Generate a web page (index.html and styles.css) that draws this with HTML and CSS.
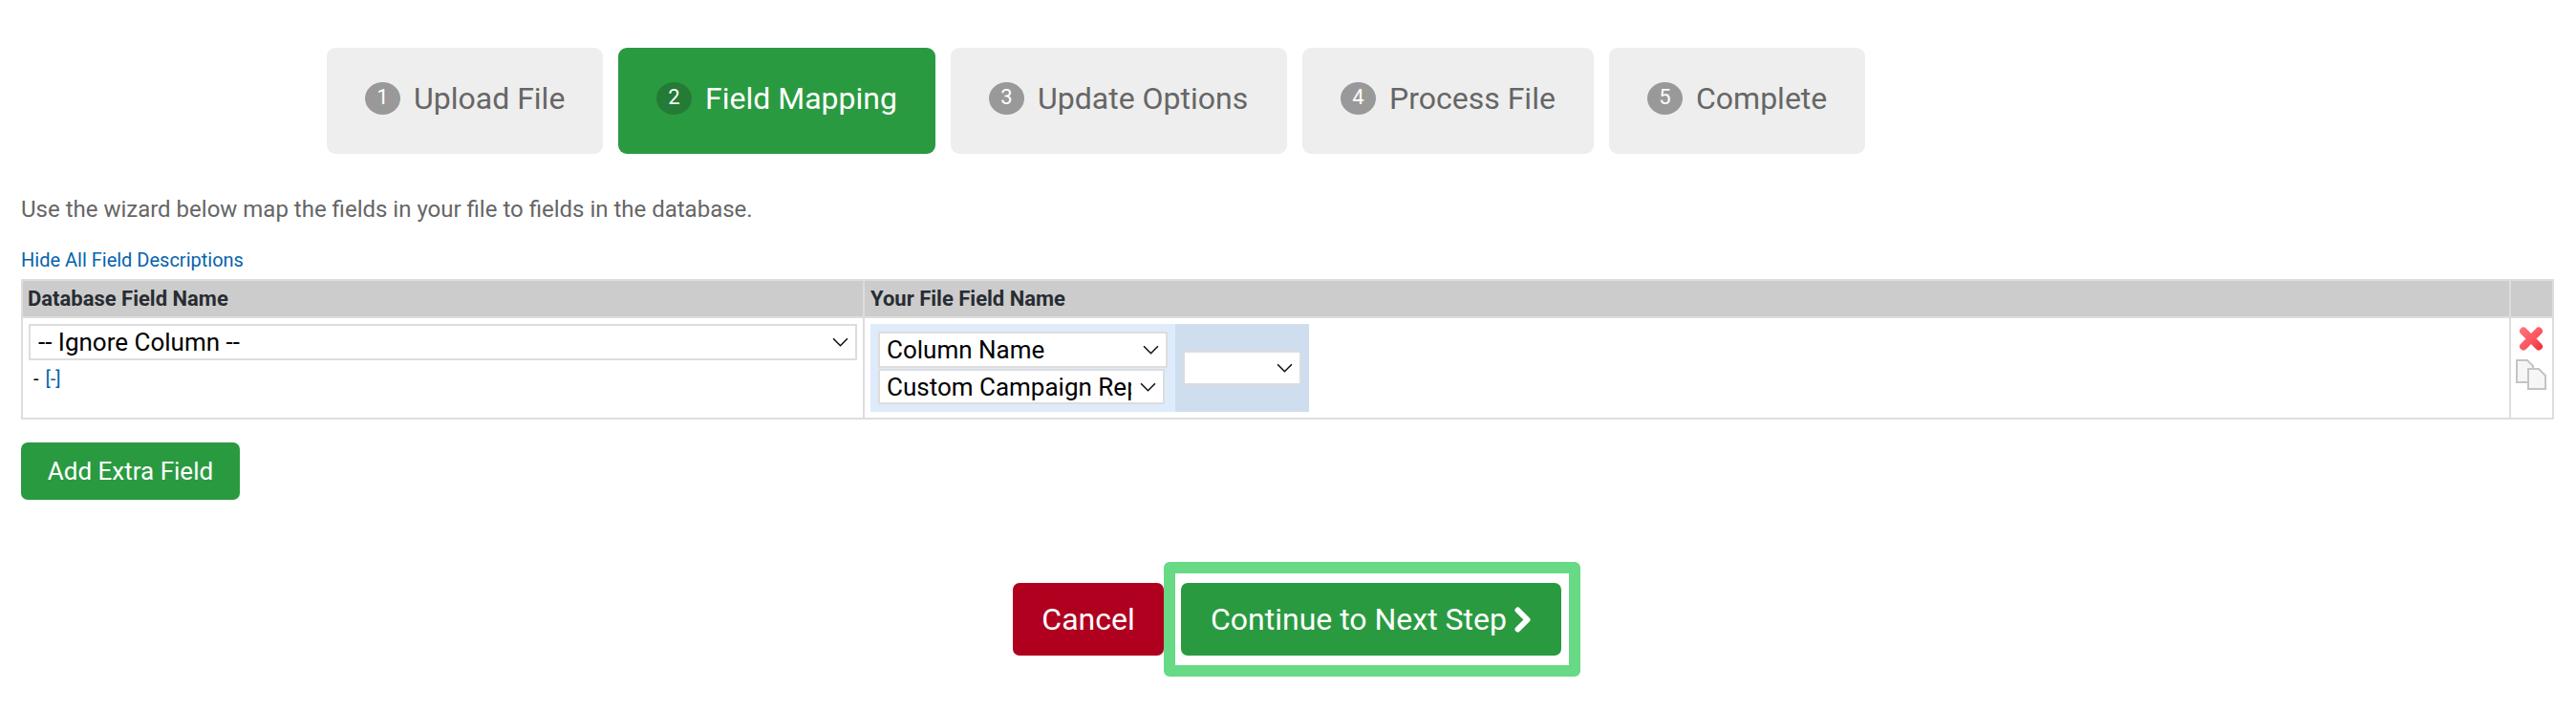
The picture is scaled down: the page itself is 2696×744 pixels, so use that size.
FILE: index.html
```html
<!DOCTYPE html>
<html lang="en">
<head>
<meta charset="utf-8">
<title>Field Mapping</title>
<link rel="stylesheet" href="styles.css">
</head>
<body>
<nav class="steps">
  <div class="step"><span class="num">1</span><span>Upload File</span></div>
  <div class="step active"><span class="num">2</span><span>Field Mapping</span></div>
  <div class="step"><span class="num">3</span><span>Update Options</span></div>
  <div class="step"><span class="num">4</span><span>Process File</span></div>
  <div class="step"><span class="num">5</span><span>Complete</span></div>
</nav>
<p class="intro">Use the wizard below map the fields in your file to fields in the database.</p>
<a class="hide-link">Hide All Field Descriptions</a>
<table class="map">
  <colgroup><col class="c1"><col class="c2"><col class="c3"></colgroup>
  <thead>
    <tr><th>Database Field Name</th><th class="th-file">Your File Field Name</th><th></th></tr>
  </thead>
  <tbody>
    <tr>
      <td class="db">
        <div class="sel sel-db"><span class="val">-- Ignore Column --</span><svg class="chev" viewBox="0 0 16 9"><path d="M1 1l7 7 7-7"/></svg></div>
        <div class="desc">- <a>[-]</a></div>
      </td>
      <td class="file">
        <div class="panel">
          <div class="panel-main">
            <div class="sel sel-a"><span class="val">Column Name</span><svg class="chev" viewBox="0 0 16 9"><path d="M1 1l7 7 7-7"/></svg></div>
            <div class="sel sel-b"><span class="val">Custom Campaign Report</span><svg class="chev" viewBox="0 0 16 9"><path d="M1 1l7 7 7-7"/></svg></div>
          </div>
          <div class="panel-side">
            <div class="sel sel-c"><span class="val"></span><svg class="chev" viewBox="0 0 16 9"><path d="M1 1l7 7 7-7"/></svg></div>
          </div>
        </div>
      </td>
      <td class="actions">
        <svg class="ico-x" viewBox="0 0 26 27">
          <defs><linearGradient id="xg" gradientUnits="userSpaceOnUse" x1="3" y1="3" x2="24" y2="25"><stop offset="0" stop-color="#ff7078"/><stop offset="0.55" stop-color="#fb5560"/><stop offset="1" stop-color="#e8323c"/></linearGradient></defs>
          <path d="M5 5.5L21 21.5M21 5.5L5 21.5"/>
        </svg>
        <svg class="ico-copy" viewBox="0 0 32 32"><path class="sheet" d="M1 1h11l6 6v17H1z"/><path class="sheet" d="M13 10h11l7 7v14H13z"/></svg>
      </td>
    </tr>
  </tbody>
</table>
<button class="btn btn-add">Add Extra Field</button>
<div class="footer">
  <button class="btn btn-big btn-cancel">Cancel</button>
  <div class="hilite">
    <button class="btn btn-big btn-next">Continue to Next Step <svg class="next-chev" viewBox="0 0 18 27"><path d="M3.5 3.5L13.5 13.5L3.5 23.5"/></svg></button>
  </div>
</div>
</body>
</html>
```
FILE: styles.css
```css
* { box-sizing: border-box; }
html, body { margin: 0; padding: 0; }
body { font-family: Roboto, sans-serif; color: #666; background: #fff; height: 744px; overflow: hidden; }

.steps { display: flex; gap: 16px; padding: 50px 0 0 342px; }
.step { flex: none; height: 111px; display: flex; align-items: center; gap: 14px; padding: 0 0 5px 40px; background: #eee; border-radius: 9px; font-size: 32px; color: #666; }
.step:nth-child(1) { width: 289px; }
.step:nth-child(2) { width: 332px; }
.step:nth-child(3) { width: 352px; }
.step:nth-child(4) { width: 305px; }
.step:nth-child(5) { width: 268px; }
.step.active { background: #2a9a41; color: #fff; }
.num { width: 37px; height: 34px; border-radius: 50%; background: #999; color: #fff; font-size: 22px; line-height: 1; padding-bottom: 3px; display: flex; align-items: center; justify-content: center; }
.active .num { background: #237b35; }

.intro { margin: 43px 0 0 22px; font-size: 24px; line-height: 30px; }
.hide-link { display: block; margin: 26px 0 0 22px; font-size: 20px; line-height: 24px; color: #0563ae; }

.map { border-collapse: separate; border-spacing: 0; table-layout: fixed; width: 2651px; margin: 8px 0 0 22px; border: 2px solid #ddd; }
.c1 { width: 881px; }
.c3 { width: 43px; }
th { background: #ccc; height: 39px; padding: 0 0 0 5px; text-align: left; font-size: 22px; font-weight: 700; color: #282c33; border-bottom: 2px solid #ddd; border-right: 2px solid #ddd; }
.th-file { padding-left: 6px; }
th:last-child, td:last-child { border-right: 0; }
td { height: 104px; padding: 0; vertical-align: top; border-right: 2px solid #ddd; }
td.db { padding: 6px 0 0 6px; }
td.file { padding: 6px 0 0 6px; }

.sel { display: flex; align-items: center; background: #fff; border: 2px solid #ddd; color: #000; font-size: 26px; height: 38px; padding: 0 7px 0 7px; }
.val { flex: 1; min-width: 0; overflow: hidden; white-space: nowrap; }
.chev { flex: none; width: 17px; height: 10px; fill: none; stroke: #111; stroke-width: 1.5; }
.sel-db { width: 867px; padding-left: 8px; }
.desc { margin-top: 7px; font-size: 20px; line-height: 24px; color: #000; padding-left: 5px; }
.desc a { color: #0563ae; margin-left: 2px; }

.panel { display: flex; width: 459px; height: 92px; }
.panel-main { width: 319px; background: #deebfb; padding: 8px 0 0 8px; }
.panel-side { width: 140px; background: #cfdeee; padding: 28px 0 0 8px; }
.sel-a { width: 303px; }
.sel-b { width: 300px; margin-top: 1px; height: 37px; }
.sel-b .val { margin-right: 9px; }
.sel-c { width: 124px; height: 36px; }

.ico-x { display: block; width: 26px; height: 27px; margin: 8px 0 0 8px; fill: none; stroke: url(#xg); stroke-width: 8; stroke-linecap: round; }
.ico-copy { display: block; width: 32px; height: 32px; margin: 8px 0 0 5px; }
.sheet { fill: #f6f6f6; stroke: #c4c4c4; stroke-width: 2; }

.btn { border: 0; border-radius: 7px; color: #fff; font-family: Roboto, sans-serif; cursor: pointer; }
.btn-add { display: block; margin: 24px 0 0 22px; width: 229px; height: 60px; background: #2a9a41; font-size: 26px; }

.footer { display: flex; align-items: center; margin: 65px 0 0 1060px; }
.btn-big { height: 76px; font-size: 32px; }
.btn-cancel { width: 158px; background: #b0001f; }
.hilite { width: 436px; height: 120px; padding: 10px 8px 10px 6px; border: 12px solid #68d985; border-radius: 6px; }
.btn-next { width: 398px; background: #2a9a41; display: flex; align-items: center; justify-content: center; gap: 8px; }
.next-chev { width: 18px; height: 27px; fill: none; stroke: #fff; stroke-width: 6; stroke-linecap: round; stroke-linejoin: round; }
```
